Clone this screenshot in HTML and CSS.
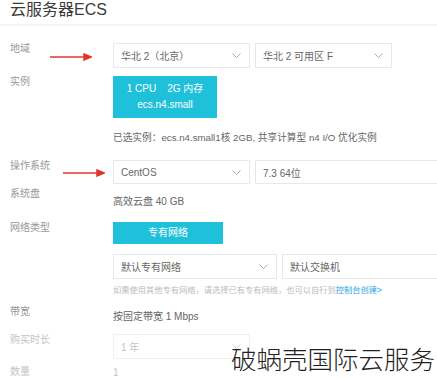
FILE: index.html
```html
<!DOCTYPE html>
<html lang="zh-CN">
<head>
<meta charset="utf-8">
<link rel="stylesheet" href="styles.css">
</head>
<body>
<div class="page">
  <h1 class="title">云服务器ECS</h1>
  <div class="form">
    <div class="row r-region">
      <div class="label">地域</div>
      <div class="field pair">
        <div class="select w137"><span>华北 2（北京）</span><svg class="chev" viewBox="0 0 9 5"><polyline points="0.5,0.5 4.5,4.5 8.5,0.5"/></svg></div>
        <div class="select w137"><span>华北 2 可用区 F</span><svg class="chev" viewBox="0 0 9 5"><polyline points="0.5,0.5 4.5,4.5 8.5,0.5"/></svg></div>
      </div>
      <svg class="arrow a1" viewBox="0 0 42 8"><line x1="0" y1="4" x2="36" y2="4"/><polygon points="34,1 41,4 34,7"/></svg>
    </div>
    <div class="row r-inst">
      <div class="label">实例</div>
      <div class="field">
        <div class="inst"><div>1 CPU&nbsp;&nbsp;&nbsp;&nbsp;2G 内存</div><div>ecs.n4.small</div></div>
        <div class="chosen">已选实例：ecs.n4.small1核 2GB, 共享计算型 n4 I/O 优化实例</div>
      </div>
    </div>
    <div class="row r-os">
      <div class="label">操作系统</div>
      <div class="field pair">
        <div class="select w137"><span>CentOS</span><svg class="chev" viewBox="0 0 9 5"><polyline points="0.5,0.5 4.5,4.5 8.5,0.5"/></svg></div>
        <div class="select grow"><span>7.3 64位</span></div>
      </div>
      <svg class="arrow a2" viewBox="0 0 42 8"><line x1="0" y1="4" x2="36" y2="4"/><polygon points="34,1 41,4 34,7"/></svg>
    </div>
    <div class="row r-disk">
      <div class="label">系统盘</div>
      <div class="field text">高效云盘 40 GB</div>
    </div>
    <div class="row r-net">
      <div class="label">网络类型</div>
      <div class="field">
        <div class="btn">专有网络</div>
        <div class="pair netsel">
          <div class="select w164"><span>默认专有网络</span><svg class="chev" viewBox="0 0 9 5"><polyline points="0.5,0.5 4.5,4.5 8.5,0.5"/></svg></div>
          <div class="select grow"><span>默认交换机</span></div>
        </div>
        <div class="hint">如需使用其他专有网络，请选择已有专有网络，也可以自行到<span class="link">控制台创建&gt;</span></div>
      </div>
    </div>
    <div class="row r-bw">
      <div class="label">带宽</div>
      <div class="field text">按固定带宽 1 Mbps</div>
    </div>
    <div class="row r-dur">
      <div class="label faint">购买时长</div>
      <div class="field">
        <div class="select w137 disabled"><span>1 年</span><svg class="chev" viewBox="0 0 9 5"><polyline points="0.5,0.5 4.5,4.5 8.5,0.5"/></svg></div>
      </div>
    </div>
    <div class="row r-qty">
      <div class="label faint">数量</div>
      <div class="field text faint">1</div>
    </div>
  </div>
  <div class="watermark">破蜗壳国际云服务</div>
</div>
</body>
</html>
```

FILE: styles.css
```css
html, body {
  margin: 0;
  padding: 0;
  background: #fff;
}
body {
  width: 437px;
  height: 380px;
  overflow: hidden;
  font-family: "Liberation Sans", "Noto Sans CJK SC", sans-serif;
  color: #555;
}
.page {
  position: relative;
  height: 380px;
}
.title {
  margin: 0;
  padding: 0 0 0 10px;
  height: 24px;
  font-size: 16px;
  line-height: 20px;
  font-weight: normal;
  color: #3a3a3a;
  border-bottom: 2px solid #f3f3f3;
}
.form {
  padding-left: 10px;
}
.row {
  position: relative;
  display: grid;
  grid-template-columns: 103px 1fr;
  align-items: start;
}
.label {
  font-size: 10px;
  line-height: 12px;
  color: #999;
  margin-top: 0;
}
.label.faint, .field.faint {
  color: #c4c4c4;
}
.field {
  min-width: 0;
}
.pair {
  display: flex;
  gap: 5px;
}
.select {
  box-sizing: border-box;
  height: 25px;
  border: 1px solid #e8e8e8;
  background: #fff;
  display: flex;
  align-items: center;
  justify-content: space-between;
  padding: 0 8px 0 7px;
  font-size: 10px;
  color: #666;
  flex: none;
}
.select.w137 { width: 137px; }
.select.w164 { width: 164px; }
.select.grow { flex: 1; margin-right: -20px; }
.select.disabled { color: #c4c4c4; border-color: #f0f0f0; }
.chev {
  width: 9px;
  height: 5px;
  fill: none;
  stroke: #aaa;
  stroke-width: 1;
}
.disabled .chev { stroke: #d4d4d4; }
.r-region { margin-top: 17px; }
.r-inst { margin-top: 8px; }
.inst {
  width: 104px;
  height: 42px;
  background: #1fc0d9;
  color: #fff;
  font-size: 10px;
  line-height: 16px;
  text-align: center;
  box-sizing: border-box;
  padding-top: 5px;
}
.chosen {
  margin-top: 13px;
  font-size: 9.7px;
  line-height: 14px;
  color: #666;
}
.r-os { margin-top: 15px; }
.r-os .select { height: 24px; }
.text {
  font-size: 10px;
  line-height: 14px;
  color: #666;
}
.r-disk { margin-top: 11px; }
.r-disk .label { margin-top: -7px; }
.r-bw .label { margin-top: -4px; }
.r-qty .label { margin-top: 0; }
.r-net { margin-top: 13px; }
.btn {
  width: 110px;
  height: 22px;
  background: #1fc0d9;
  color: #fff;
  font-size: 10px;
  line-height: 22px;
  text-align: center;
}
.netsel { margin-top: 10px; }
.hint {
  margin-top: 5px;
  font-size: 8.25px;
  line-height: 14px;
  color: #bbb;
  white-space: nowrap;
}
.link { color: #2aa6e0; }
.r-bw { margin-top: 12px; }
.r-dur { margin-top: 10px; }
.r-qty { margin-top: 7px; }
.arrow {
  position: absolute;
  width: 42px;
  height: 8px;
  stroke: #e3342f;
  stroke-width: 1.5;
  fill: #e3342f;
}
.a1 { left: 40px; top: 10px; }
.a2 { left: 53px; top: 9px; }
.watermark {
  position: absolute;
  left: 231px;
  top: 342px;
  font-family: "Noto Sans CJK SC", sans-serif;
  font-size: 25.5px;
  line-height: 32px;
  color: #222;
  font-weight: 300;
  white-space: nowrap;
}
```
